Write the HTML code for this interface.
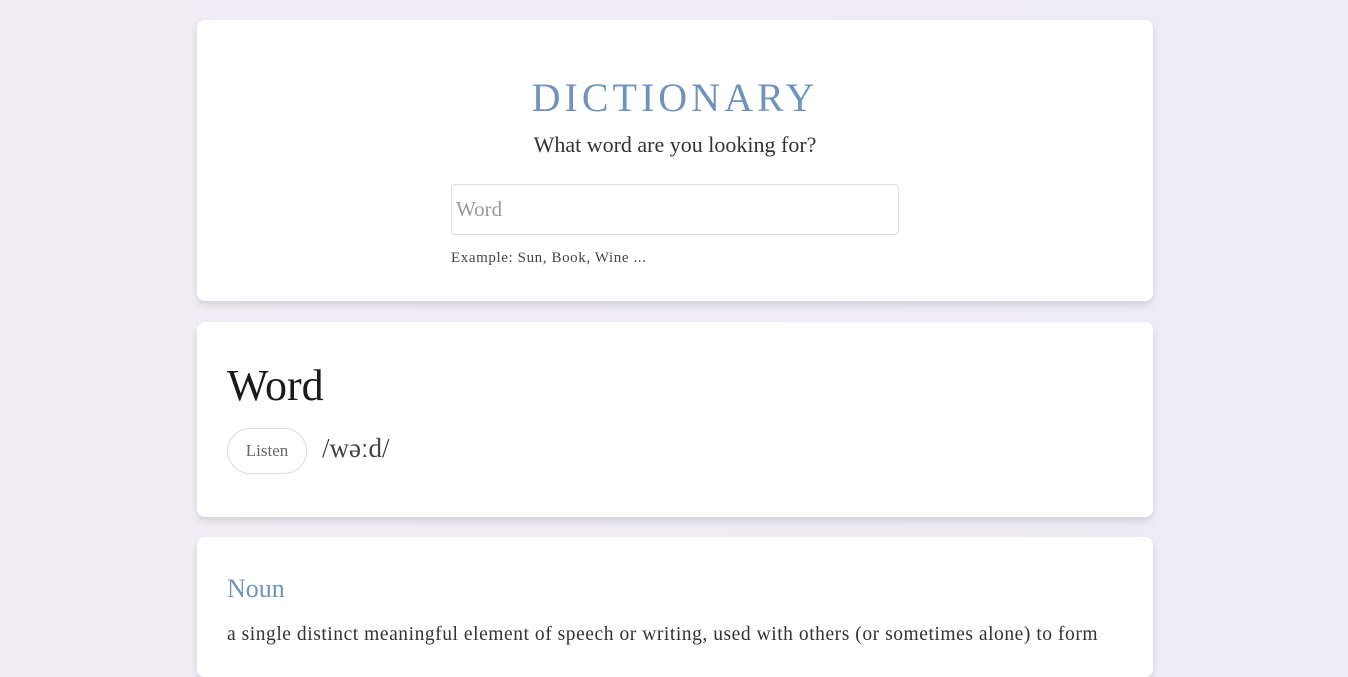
<!DOCTYPE html>
<html><head><meta charset="utf-8"><style>
*{box-sizing:border-box;margin:0;padding:0}
body{width:1348px;height:656px;overflow:hidden;background:linear-gradient(90deg,#f1edf3,#eeecf6);font-family:"Liberation Serif",serif;color:#222}
.card{position:absolute;left:197px;width:956px;background:#fff;border-radius:8px;box-shadow:0 4px 8px rgba(0,0,0,0.12)}
h1{position:absolute;top:54px;left:0;width:100%;text-align:center;font-weight:normal;font-size:40px;letter-spacing:4px;color:#6e94bd}
.sub{position:absolute;top:112px;width:100%;text-align:center;font-size:22px;color:#333}
.inp{position:absolute;left:254px;top:164px;width:448px;height:51px;border:1px solid #ddd;border-radius:4px;font-size:21px;color:#999;padding:12px 4px}
.ex{position:absolute;left:254px;top:230px;font-size:15px;letter-spacing:0.6px;color:#444}
.w{position:absolute;left:30px;top:38px;font-size:44px;color:#1a1a1a}
.btn{position:absolute;left:30px;top:106px;width:80px;height:46px;border:1px solid #ddd;border-radius:23px;text-align:center;line-height:44px;font-size:17px;color:#666}
.ph{position:absolute;left:125px;top:111px;font-size:27px;color:#444}
.n{position:absolute;left:30px;top:37px;font-size:26px;color:#6e94bd}
.d{position:absolute;left:30px;top:87px;font-size:19.5px;letter-spacing:0.55px;color:#333;white-space:nowrap}
</style></head><body>
<div class="card" style="top:20px;height:281px">
<h1>DICTIONARY</h1>
<div class="sub">What word are you looking for?</div>
<div class="inp">Word</div>
<div class="ex">Example: Sun, Book, Wine ...</div>
</div>
<div class="card" style="top:322px;height:195px">
<div class="w">Word</div>
<div class="btn">Listen</div>
<div class="ph">/wəːd/</div>
</div>
<div class="card" style="top:537px;height:140px">
<div class="n">Noun</div>
<div class="d">a single distinct meaningful element of speech or writing, used with others (or sometimes alone) to form</div>
</div>
</body></html>
